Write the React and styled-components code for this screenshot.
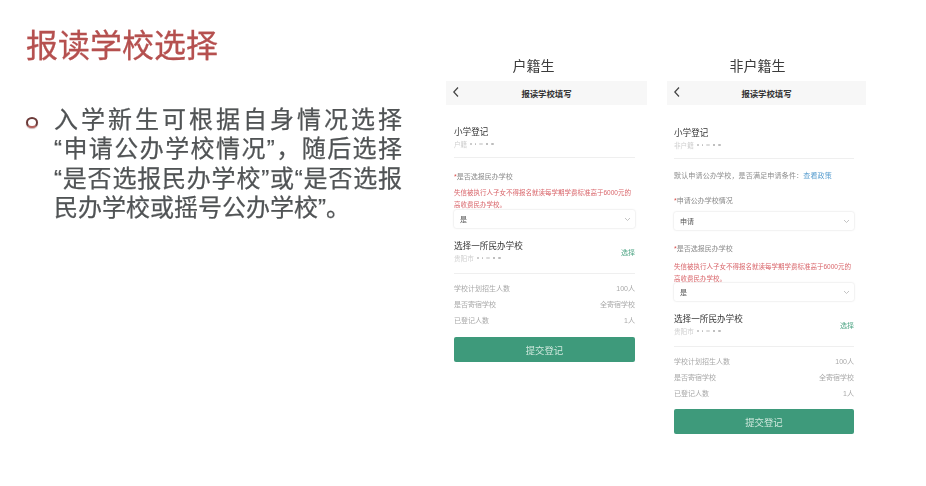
import React from "react";
import styled, { createGlobalStyle } from "styled-components";

const GlobalStyle = createGlobalStyle`
  html, body { margin: 0; padding: 0; background: #fff; }
  body { font-family: "Liberation Sans", "Noto Sans CJK SC", sans-serif; }
`;

const Page = styled.div`
  width: 926px;
  height: 486px;
  overflow: hidden;
  display: flex;
  background: #fff;
`;

const Intro = styled.div`
  width: 446px;
  flex: none;
  padding: 25px 0 0 26px;
  box-sizing: border-box;
  filter: blur(0.35px);
`;

const Title = styled.h1`
  margin: 0 0 38px;
  height: 42px;
  line-height: 42px;
  font-size: 32px;
  font-weight: 400;
  color: #b5504f;
  -webkit-text-stroke: 0.3px #b5504f;
`;

const Bullet = styled.div`
  display: flex;
  gap: 16px;
`;

const Ring = styled.span`
  flex: none;
  width: 8px;
  height: 7px;
  margin-top: 12px;
  border-radius: 50%;
  border: 2px solid #6b3a38;
  border-bottom-color: #b5605c;
  background: #fff;
  box-shadow: 0 1px 1px rgba(120, 60, 60, 0.4);
`;

const Lines = styled.div`
  width: 348px;
  font-size: 24px;
  color: #505355;
  -webkit-text-stroke: 0.25px #505355;
`;

const Line = styled.div`
  height: 29.3px;
  line-height: 29.3px;
  white-space: normal;
  text-align: justify;
  text-align-last: ${(p) => (p.$last ? "left" : "justify")};
`;

const Columns = styled.div`
  display: flex;
  gap: 20px;
  padding-top: 56px;
`;

const Column = styled.section`
  width: ${(p) => p.$width}px;
  flex: none;
  filter: blur(0.45px);
`;

const Caption = styled.div`
  height: 25px;
  line-height: 21px;
  text-align: center;
  font-size: 14px;
  color: #3c3c3c;
  padding-right: ${(p) => p.$shift}px;
`;

const NavBar = styled.div`
  height: 24px;
  background: #f7f7f7;
  display: flex;
  align-items: center;
  justify-content: center;
  position: relative;
  font-size: 8.4px;
  font-weight: 700;
  color: #333;
`;

const Back = styled.svg`
  position: absolute;
  left: 6px;
  top: 5px;
  width: 8px;
  height: 12px;
  fill: none;
  stroke: #444;
  stroke-width: 1.2;
`;

const Form = styled.div`
  padding: 0 12px 0 ${(p) => p.$left}px;
`;

const Block = styled.div`
  padding-top: ${(p) => p.$top || 0}px;
`;

const Heading = styled.div`
  font-size: 8.6px;
  line-height: 12px;
  color: #333;
`;

const Muted = styled.div`
  display: flex;
  align-items: center;
  gap: 3px;
  height: 12px;
  font-size: 6.6px;
  color: #cfcfcf;
`;

const Speck = styled.span`
  width: ${(p) => p.$w || 2}px;
  height: 2px;
  background: ${(p) => p.$c || "#bcbcbc"};
  border-radius: 1px;
`;

const Rule = styled.div`
  height: 1px;
  background: #efefef;
  margin-top: ${(p) => p.$top || 0}px;
`;

const Label = styled.div`
  font-size: 7px;
  line-height: 11px;
  color: #8a8a8a;
`;

const Star = styled.span`
  color: #d9534f;
`;

const Warning = styled.div`
  font-size: 6.5px;
  line-height: 11.5px;
  color: #d9666b;
`;

const Notice = styled.div`
  font-size: 7px;
  line-height: 11px;
  color: #8d8d8d;
  letter-spacing: 0.18px;
`;

const PolicyLink = styled.span`
  color: #5a9fd0;
`;

const Select = styled.div`
  height: 18px;
  display: flex;
  align-items: center;
  justify-content: space-between;
  padding: 0 4px 0 6px;
  background: #fff;
  border-radius: 2px;
  box-shadow: 0 0 2px rgba(0, 0, 0, 0.18);
  font-size: 7px;
  color: #555;
  margin-top: ${(p) => p.$top || 0}px;
`;

const Chevron = styled.svg`
  width: 7px;
  height: 5px;
  fill: none;
  stroke: #b5b5b5;
  stroke-width: 0.8;
`;

const SchoolRow = styled.div`
  display: flex;
  align-items: center;
  justify-content: space-between;
  padding-top: ${(p) => p.$top || 0}px;
`;

const Pick = styled.span`
  font-size: 7px;
  color: #4fa585;
`;

const Stats = styled.div`
  padding-top: 7px;
`;

const Stat = styled.div`
  display: flex;
  justify-content: space-between;
  height: 16px;
  line-height: 16px;
  font-size: 7px;
  color: #a9a9a9;
`;

const Submit = styled.div`
  height: 25px;
  margin-top: ${(p) => p.$top}px;
  border-radius: 2px;
  background: #3e9a7b;
  color: #cfe8dd;
  font-size: 9.4px;
  display: flex;
  align-items: center;
  justify-content: center;
`;

const Arrow = () => (
  <Chevron viewBox="0 0 7 5">
    <path d="M1 1 L3.5 3.5 L6 1" />
  </Chevron>
);

const Nav = () => (
  <NavBar>
    <Back viewBox="0 0 8 12">
      <path d="M6 1.5 L1.8 6 L6 10.5" />
    </Back>
    报读学校填写
  </NavBar>
);

const Redacted = ({ city }) => (
  <Muted>
    {city}
    <Speck />
    <Speck $w={1} />
    <Speck $w={4} $c="#dcdcdc" />
    <Speck $c="#aaa" />
    <Speck $w={3} />
  </Muted>
);

const SchoolBlock = ({ submitTop }) => (
  <>
    <SchoolRow $top={12}>
      <div>
        <Heading>选择一所民办学校</Heading>
        <Redacted city="贵阳市" />
      </div>
      <Pick>选择</Pick>
    </SchoolRow>
    <Rule $top={9} />
    <Stats>
      <Stat><span>学校计划招生人数</span><span>100人</span></Stat>
      <Stat><span>是否寄宿学校</span><span>全寄宿学校</span></Stat>
      <Stat><span>已登记人数</span><span>1人</span></Stat>
    </Stats>
    <Submit $top={submitTop}>提交登记</Submit>
  </>
);

const Warn = () => (
  <Warning>
    失信被执行人子女不得报名就读每学期学费标准高于6000元的
    <br />
    高收费民办学校。
  </Warning>
);

export default function App() {
  return (
    <Page>
      <GlobalStyle />
      <Intro>
        <Title>报读学校选择</Title>
        <Bullet>
          <Ring />
          <Lines>
            <Line>入学新生可根据自身情况选择</Line>
            <Line>“申请公办学校情况”，随后选择</Line>
            <Line>“是否选报民办学校”或“是否选报</Line>
            <Line $last>民办学校或摇号公办学校”。</Line>
          </Lines>
        </Bullet>
      </Intro>
      <Columns>
        <Column $width={201}>
          <Caption $shift={26}>户籍生</Caption>
          <Nav />
          <Form $left={8}>
            <Block $top={21}>
              <Heading>小学登记</Heading>
              <Redacted city="户籍" />
            </Block>
            <Rule $top={7} />
            <Block $top={13}>
              <Label><Star>*</Star>是否选报民办学校</Label>
            </Block>
            <Block $top={5}><Warn /></Block>
            <Select>是<Arrow /></Select>
            <SchoolBlock submitTop={8} />
          </Form>
        </Column>
        <Column $width={199}>
          <Caption $shift={18}>非户籍生</Caption>
          <Nav />
          <Form $left={7}>
            <Block $top={22}>
              <Heading>小学登记</Heading>
              <Redacted city="非户籍" />
            </Block>
            <Rule $top={7} />
            <Block $top={11}>
              <Notice>默认申请公办学校，是否满足申请条件：<PolicyLink>查看政策</PolicyLink></Notice>
            </Block>
            <Block $top={14}>
              <Label><Star>*</Star>申请公办学校情况</Label>
            </Block>
            <Select $top={6}>申请<Arrow /></Select>
            <Block $top={13}>
              <Label><Star>*</Star>是否选报民办学校</Label>
            </Block>
            <Block $top={7}><Warn /></Block>
            <Select $top={-1}>是<Arrow /></Select>
            <SchoolBlock submitTop={7} />
          </Form>
        </Column>
      </Columns>
    </Page>
  );
}
